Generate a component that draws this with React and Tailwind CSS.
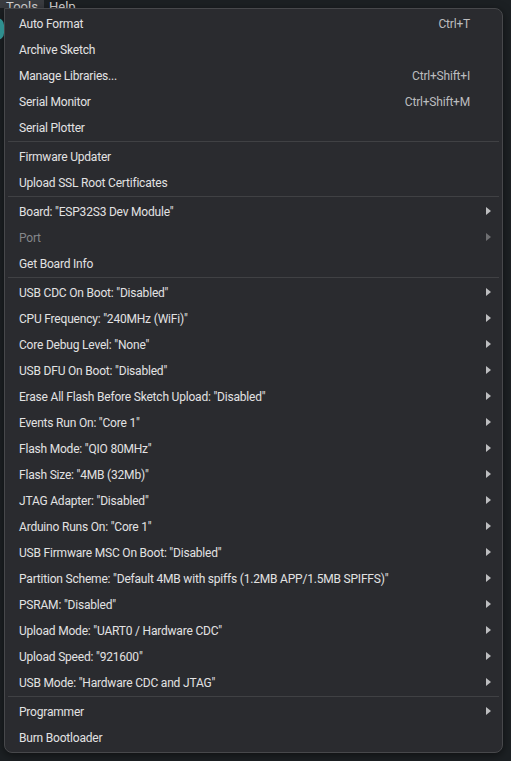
import React from 'react';

const groups = [
  [
    { label: 'Auto Format', shortcut: 'Ctrl+T' },
    { label: 'Archive Sketch' },
    { label: 'Manage Libraries...', shortcut: 'Ctrl+Shift+I' },
    { label: 'Serial Monitor', shortcut: 'Ctrl+Shift+M' },
    { label: 'Serial Plotter' },
  ],
  [
    { label: 'Firmware Updater' },
    { label: 'Upload SSL Root Certificates' },
  ],
  [
    { label: 'Board: "ESP32S3 Dev Module"', sub: true },
    { label: 'Port', sub: true, disabled: true },
    { label: 'Get Board Info' },
  ],
  [
    { label: 'USB CDC On Boot: "Disabled"', sub: true },
    { label: 'CPU Frequency: "240MHz (WiFi)"', sub: true },
    { label: 'Core Debug Level: "None"', sub: true },
    { label: 'USB DFU On Boot: "Disabled"', sub: true },
    { label: 'Erase All Flash Before Sketch Upload: "Disabled"', sub: true },
    { label: 'Events Run On: "Core 1"', sub: true },
    { label: 'Flash Mode: "QIO 80MHz"', sub: true },
    { label: 'Flash Size: "4MB (32Mb)"', sub: true },
    { label: 'JTAG Adapter: "Disabled"', sub: true },
    { label: 'Arduino Runs On: "Core 1"', sub: true },
    { label: 'USB Firmware MSC On Boot: "Disabled"', sub: true },
    { label: 'Partition Scheme: "Default 4MB with spiffs (1.2MB APP/1.5MB SPIFFS)"', sub: true },
    { label: 'PSRAM: "Disabled"', sub: true },
    { label: 'Upload Mode: "UART0 / Hardware CDC"', sub: true },
    { label: 'Upload Speed: "921600"', sub: true },
    { label: 'USB Mode: "Hardware CDC and JTAG"', sub: true },
  ],
  [
    { label: 'Programmer', sub: true },
    { label: 'Burn Bootloader' },
  ],
];

function Arrow({ disabled }) {
  return (
    <svg width="6" height="8" viewBox="0 0 6 8" className="shrink-0 mt-[-2px]">
      <path d="M0 0 L5 4 L0 8 Z" fill={disabled ? '#6e6f72' : '#bdbec0'} />
    </svg>
  );
}

function MenuItem({ item }) {
  return (
    <div className="flex items-center h-[26px] pt-[2px] pl-[14px] pr-[10px]">
      <span className={`flex-1 whitespace-nowrap ${item.disabled ? 'text-[#85868a]' : 'text-[#e2e2e3]'}`}>
        {item.label}
      </span>
      {item.shortcut && <span className="text-[#bcbdbf] pr-[22px]">{item.shortcut}</span>}
      {item.sub && <Arrow disabled={item.disabled} />}
    </div>
  );
}

export default function App() {
  return (
    <div
      className="w-[511px] h-[761px] bg-[#1c2023] overflow-hidden flex flex-col"
      style={{ fontFamily: 'Roboto, "Open Sans", sans-serif' }}
    >
      {/* menu bar, mostly scrolled off the top */}
      <div className="h-[8px] flex items-end text-[13px] text-[#d4d4d4] leading-none overflow-hidden">
        <div className="w-[44px] h-[8px] bg-[#3a3c40] flex items-end justify-center">
          <span className="mb-[-5px]">Tools</span>
        </div>
        <span className="ml-[5px] mb-[-5px]">Help</span>
      </div>

      <div className="flex flex-1">
        {/* app strip left of the menu */}
        <div className="w-[4px] relative">
          <div className="absolute left-[-10px] top-[10px] w-[14px] h-[22px] rounded-full bg-[#2f8f8f]" />
        </div>

        {/* dropdown */}
        <div className="w-[499px] h-[745px] bg-[#2a2b2f] border border-[#47484b] rounded-tr-[8px] rounded-b-[8px] pt-[1px] text-[12px] tracking-[-0.2px] shadow-[0_2px_8px_rgba(0,0,0,0.5)]">
          {groups.map((g, gi) => (
            <div key={gi}>
              {gi > 0 && (
                <div className="h-[3px] flex items-center px-[3px]">
                  <div className="h-px w-full bg-[#404144]" />
                </div>
              )}
              {g.map((item) => (
                <MenuItem key={item.label} item={item} />
              ))}
            </div>
          ))}
        </div>
      </div>
    </div>
  );
}
